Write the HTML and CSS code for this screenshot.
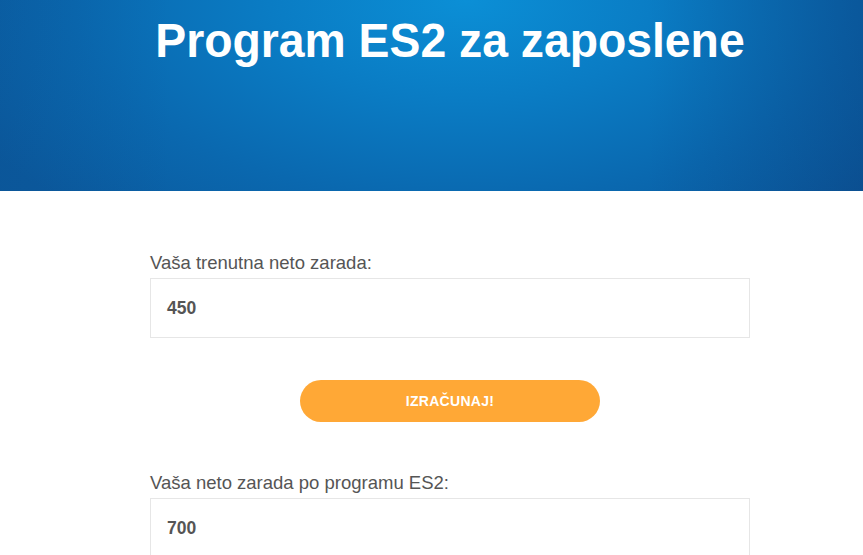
FILE: index.html
```html
<!DOCTYPE html>
<html lang="sr">
<head>
<meta charset="utf-8">
<title>Program ES2 za zaposlene</title>
<link rel="stylesheet" href="styles.css">
</head>
<body>
<header class="hero">
  <div class="wrap">
    <h1 class="title">Program ES2 za zaposlene</h1>
  </div>
</header>
<main class="wrap form">
  <label class="label" for="cur">Vaša trenutna neto zarada:</label>
  <div class="field" id="cur">450</div>
  <div class="btn-row"><button class="btn" type="button">IZRAČUNAJ!</button></div>
  <label class="label" for="res">Vaša neto zarada po programu ES2:</label>
  <div class="field" id="res">700</div>
</main>
</body>
</html>
```
FILE: styles.css
```css
html, body {
  margin: 0;
  padding: 0;
  background: #ffffff;
  font-family: "Liberation Sans", Arial, sans-serif;
  overflow: hidden;
}
.wrap {
  width: 600px;
  margin-left: 150px;
}
.hero {
  height: 191px;
  background:
    linear-gradient(90deg, rgba(10, 60, 120, 0.12) 0%, rgba(10, 60, 120, 0) 20%, rgba(10, 60, 120, 0) 75%, rgba(10, 50, 110, 0.3) 100%),
    radial-gradient(ellipse 65% 150% at 54% 0%, #0b8fd6 0%, #0a7cc4 35%, #0a68af 70%, #0b5a9e 100%);
  overflow: hidden;
}
.title {
  margin: 12px -40px 0 -40px;
  text-align: center;
  color: #ffffff;
  font-size: 49px;
  line-height: 56px;
  font-weight: bold;
  white-space: nowrap;
  transform: scaleX(0.945);
}
.form {
  padding-top: 60px;
}
.label {
  display: block;
  font-size: 18.5px;
  line-height: 24px;
  color: #555555;
  margin-bottom: 3px;
}
.field {
  box-sizing: border-box;
  height: 60px;
  border: 1px solid #e6e6e6;
  padding: 0 16px;
  display: flex;
  align-items: center;
  font-size: 17.5px;
  font-weight: bold;
  color: #555555;
}
.btn-row {
  display: flex;
  justify-content: center;
  padding: 42px 0 49px;
}
.btn {
  width: 300px;
  height: 42px;
  border: none;
  border-radius: 21px;
  background: #ffa836;
  color: #ffffff;
  font-family: "Liberation Sans", Arial, sans-serif;
  font-size: 14px;
  font-weight: bold;
  letter-spacing: 0.3px;
}
```
